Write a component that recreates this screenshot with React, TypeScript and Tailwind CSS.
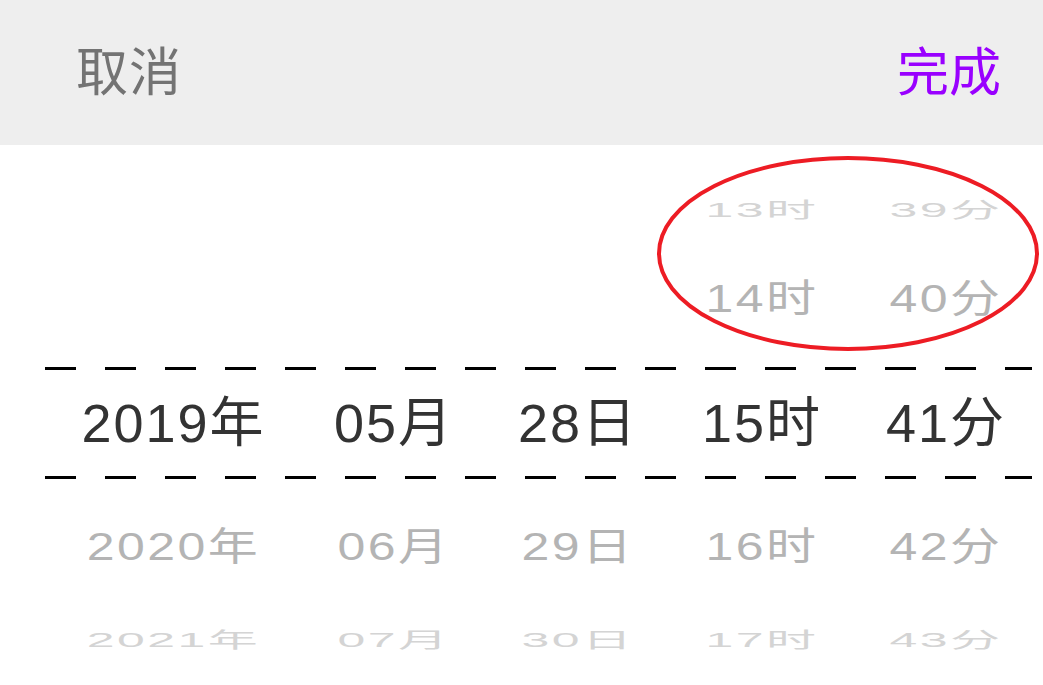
import React from 'react';

type Cell = string | null;

const FONT = "font-['Liberation_Sans','Noto_Sans_CJK_SC',sans-serif]";

const rows: { cells: Cell[]; height: string; tone: string; squash: string }[] = [
  { cells: [null, null, null, '13时', '39分'], height: 'h-[46px]', tone: 'text-[#d4d4d4]', squash: 'scale-y-[0.42]' },
  { cells: [null, null, null, '14时', '40分'], height: 'h-[136px]', tone: 'text-[#b4b4b4]', squash: 'scale-y-[0.78]' },
];

const below: { cells: Cell[]; height: string; tone: string; squash: string }[] = [
  { cells: ['2020年', '06月', '29日', '16时', '42分'], height: 'h-[136px]', tone: 'text-[#b4b4b4]', squash: 'scale-y-[0.78]' },
  { cells: ['2021年', '07月', '30日', '17时', '43分'], height: 'h-[48px]', tone: 'text-[#d4d4d4]', squash: 'scale-y-[0.42]' },
];

const GRID = 'ml-[45px] grid w-[993px] grid-cols-[257px_184px_184px_184px_184px]';

function WheelRow({ cells, height, tone, squash }: { cells: Cell[]; height: string; tone: string; squash: string }) {
  return (
    <div className={`${GRID} ${height} items-center`}>
      {cells.map((c, i) => (
        <div key={i} className={`flex justify-center ${tone} text-[50px] leading-none`}>
          {c && <span className={`inline-block ${squash} tracking-[2.5px]`}>{c}</span>}
        </div>
      ))}
    </div>
  );
}

function Dashes() {
  return (
    <div className="ml-[45px] h-[3px] w-[987px] bg-[repeating-linear-gradient(to_right,#000_0px,#000_31px,transparent_31px,transparent_60px)]" />
  );
}

export default function App() {
  return (
    <div className={`relative h-[685px] w-[1043px] overflow-hidden bg-white ${FONT}`}>
      <div className="flex h-[145px] items-center justify-between bg-[#eeeeee] pl-[76px] pr-[42px]">
        <span className="text-[52px] leading-none text-[#737373] tracking-[1px]">取消</span>
        <span className="text-[52px] leading-none text-[#9900ff]">完成</span>
      </div>

      <div className="pt-[40px]">
        {rows.map((r, i) => (
          <WheelRow key={i} {...r} />
        ))}
        <div className="flex h-[112px] flex-col justify-between">
          <Dashes />
          <div className={`${GRID} items-center`}>
            {['2019年', '05月', '28日', '15时', '41分'].map((c) => (
              <div key={c} className="flex justify-center text-[54px] leading-none tracking-[2px] text-[#333333]">
                {c}
              </div>
            ))}
          </div>
          <Dashes />
        </div>
        {below.map((r, i) => (
          <WheelRow key={i} {...r} />
        ))}
      </div>

      <svg className="pointer-events-none absolute left-0 top-0" width="1043" height="685">
        <ellipse cx="848" cy="253.5" rx="189" ry="95.5" fill="none" stroke="#ed1c24" strokeWidth="4" />
      </svg>
    </div>
  );
}
